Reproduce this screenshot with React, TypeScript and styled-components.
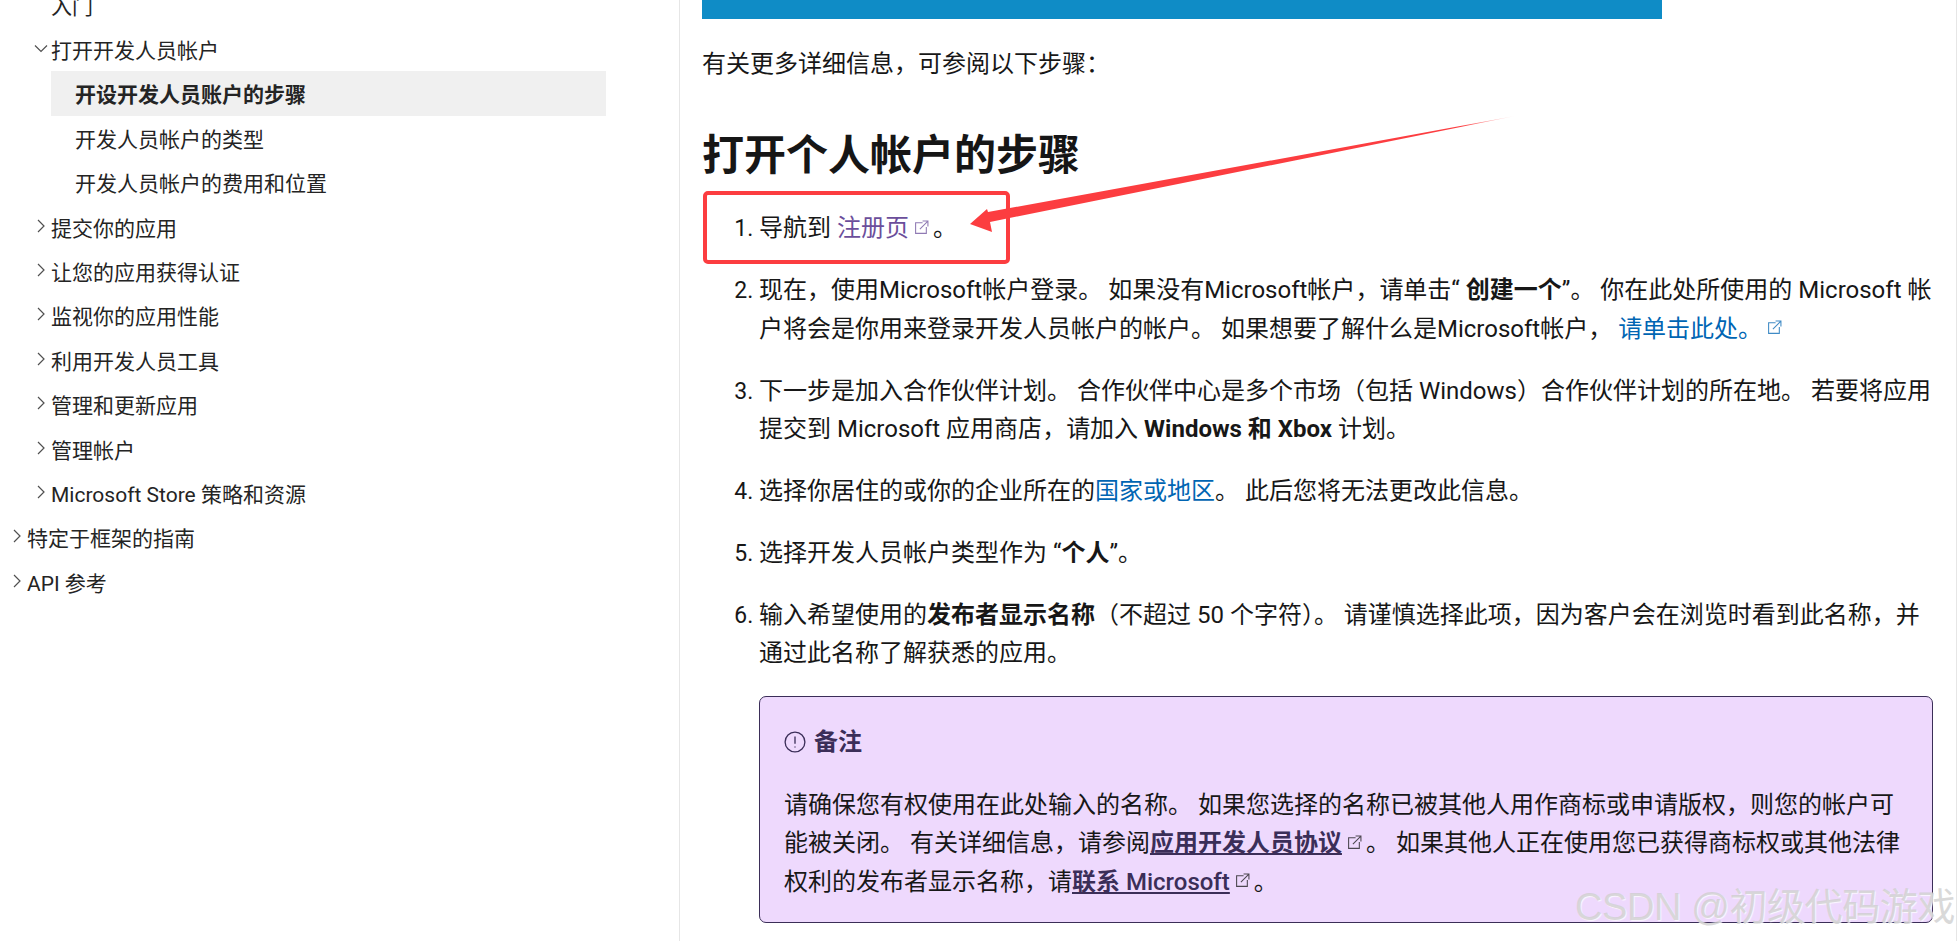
import styled, { createGlobalStyle } from 'styled-components';

const GlobalStyle = createGlobalStyle`
  html, body {
    margin: 0;
    height: 100%;
    overflow: hidden;
    background: #fff;
  }
  body {
    font-family: Roboto, "Noto Sans CJK SC", sans-serif;
    color: #171717;
  }
`;

const Page = styled.div`
  position: relative;
  display: flex;
  width: 1959px;
  height: 941px;
  overflow: hidden;
`;

const Sidebar = styled.aside`
  flex: 0 0 680px;
  box-sizing: border-box;
  border-right: 1px solid #e6e6e6;
`;

const TocList = styled.ul`
  list-style: none;
  margin: -17.5px 0 0;
  padding: 0;
`;

const TocRow = styled.li<{ $level: number; $active?: boolean }>`
  display: flex;
  align-items: center;
  height: 44.4px;
  box-sizing: border-box;
  margin-left: ${(p) => (p.$level === 0 ? 27 : 51)}px;
  width: ${(p) => (p.$level === 0 ? 579 : 555)}px;
  padding-left: ${(p) => (p.$level === 2 ? 24 : 0)}px;
  position: relative;
  font-size: 21px;
  color: #242424;
  font-weight: ${(p) => (p.$active ? 700 : 400)};
  background: ${(p) => (p.$active ? '#f0f0f0' : 'transparent')};
`;

const Caret = styled.svg`
  position: absolute;
  left: -17px;
  top: 50%;
  margin-top: -8px;
  width: 14px;
  height: 14px;
  fill: none;
  stroke: #505050;
  stroke-width: 1.2;
`;

const Main = styled.main`
  flex: 1;
  min-width: 0;
  padding: 0 23px 0 22px;
`;

const ScrollEdge = styled.div`
  flex: 0 0 3px;
  box-sizing: border-box;
  border-left: 1px solid #e6e6e6;
`;

const Banner = styled.div`
  width: 960px;
  height: 19px;
  background: #0f8cc6;
  margin-bottom: 26px;
`;

const Text = styled.p`
  margin: 0;
  font-size: 24px;
  line-height: 38.4px;
`;

const Heading = styled.h2`
  margin: 46px 0 26px;
  font-size: 42px;
  line-height: 54px;
  font-weight: 700;
  color: #161616;
`;

const Steps = styled.ol`
  margin: 0;
  padding: 0 0 0 57px;
  font-size: 24px;
  line-height: 38.4px;
`;

const Step = styled.li`
  margin-bottom: 23.5px;

  &::marker {
    content: counter(list-item) ". ";
    font-size: 23px;
  }
`;

const Link = styled.a<{ $visited?: boolean }>`
  color: ${(p) => (p.$visited ? '#6b4e9b' : '#0065b3')};
  text-decoration: none;
`;

const OutIcon = styled.svg`
  display: inline-block;
  width: 15px;
  height: 15px;
  margin: 0 4px 6px 5px;
  vertical-align: middle;
  fill: none;
  stroke: currentColor;
  stroke-width: 1;
  opacity: 0.75;
`;

const Note = styled.div`
  margin-top: 23px;
  padding: 26px 24px 21px 24px;
  background: #eed9fd;
  border: 1px solid #3b2e58;
  border-radius: 7px;
  font-size: 24px;
  line-height: 38.4px;
`;

const NoteTitle = styled.div`
  display: flex;
  align-items: center;
  gap: 8px;
  margin-bottom: 25px;
  font-weight: 700;
  color: #3b2e58;
`;

const NoteIcon = styled.svg`
  flex: 0 0 22px;
  width: 22px;
  height: 22px;
  fill: none;
  stroke: #3b2e58;
  stroke-width: 1.2;
`;

const NoteLink = styled.a<{ $bold?: boolean }>`
  color: #3b2e58;
  text-decoration: underline;
  font-weight: ${(p) => (p.$bold ? 700 : 500)};
`;

const RedBox = styled.div`
  position: absolute;
  left: 703px;
  top: 191px;
  width: 307px;
  height: 73px;
  box-sizing: border-box;
  border: 4px solid #fc3d40;
  border-radius: 5px;
`;

const ArrowLayer = styled.svg`
  position: absolute;
  left: 0;
  top: 0;
  width: 1959px;
  height: 941px;
  pointer-events: none;
`;

const Watermark = styled.div`
  position: absolute;
  right: 4px;
  top: 883px;
  font-family: "Liberation Sans", "Noto Sans CJK SC", sans-serif;
  font-size: 38px;
  line-height: 48px;
  letter-spacing: -0.4px;
  white-space: nowrap;
  color: rgba(205, 205, 205, 0.75);
  text-shadow: 1px 1px 1px rgba(255, 255, 255, 0.8);
`;

const Chevron = ({ open }: { open?: boolean }) => (
  <Caret viewBox="0 0 14 14">
    <path d={open ? 'M1 4.5L7 10.5L13 4.5' : 'M4 1L10 7L4 13'} />
  </Caret>
);

const ExternalIcon = () => (
  <OutIcon viewBox="0 0 14 14">
    <path d="M8 2.5H1.5V12.5H11.5V6.5" />
    <path d="M5.5 8.5L12.5 1.5M8 1H13V6" />
  </OutIcon>
);

// full-width punctuation, kept as escapes so it can't get normalised to ASCII
const C = '\uFF0C';
const LP = '\uFF08';
const RP = '\uFF09';

const tocRows = [
  { label: '入门', level: 1 },
  { label: '打开开发人员帐户', level: 1, caret: true, open: true },
  { label: '开设开发人员账户的步骤', level: 2, active: true },
  { label: '开发人员帐户的类型', level: 2 },
  { label: '开发人员帐户的费用和位置', level: 2 },
  { label: '提交你的应用', level: 1, caret: true },
  { label: '让您的应用获得认证', level: 1, caret: true },
  { label: '监视你的应用性能', level: 1, caret: true },
  { label: '利用开发人员工具', level: 1, caret: true },
  { label: '管理和更新应用', level: 1, caret: true },
  { label: '管理帐户', level: 1, caret: true },
  { label: 'Microsoft Store 策略和资源', level: 1, caret: true },
  { label: '特定于框架的指南', level: 0, caret: true },
  { label: 'API 参考', level: 0, caret: true },
];

const App = () => {
  return (
    <Page>
      <GlobalStyle />
      <Sidebar>
        <TocList>
          {tocRows.map((row) => (
            <TocRow key={row.label} $level={row.level} $active={row.active}>
              {row.caret && <Chevron open={row.open} />}
              {row.label}
            </TocRow>
          ))}
        </TocList>
      </Sidebar>

      <Main>
        <Banner />
        <Text>有关更多详细信息{C}可参阅以下步骤{'\uFF1A'}</Text>
        <Heading>打开个人帐户的步骤</Heading>
        <Steps>
          <Step>
            导航到 <Link $visited href="#">注册页<ExternalIcon /></Link>。
          </Step>
          <Step>
            现在{C}使用Microsoft帐户登录。 如果没有Microsoft帐户{C}请单击“ <b>创建一个</b>”。 你在此处所使用的 Microsoft 帐户将会是你用来登录开发人员帐户的帐户。 如果想要了解什么是Microsoft帐户{C} <Link href="#">请单击此处。<ExternalIcon /></Link>
          </Step>
          <Step>
            下一步是加入合作伙伴计划。 合作伙伴中心是多个市场{LP}包括 Windows{RP}合作伙伴计划的所在地。 若要将应用提交到 Microsoft 应用商店{C}请加入 <b>Windows 和 Xbox</b> 计划。
          </Step>
          <Step>
            选择你居住的或你的企业所在的<Link href="#">国家或地区</Link>。 此后您将无法更改此信息。
          </Step>
          <Step>
            选择开发人员帐户类型作为 “<b>个人</b>”。
          </Step>
          <Step>
            输入希望使用的<b>发布者显示名称</b>{LP}不超过 50 个字符{RP}。 请谨慎选择此项{C}因为客户会在浏览时看到此名称{C}并通过此名称了解获悉的应用。
            <Note>
              <NoteTitle>
                <NoteIcon viewBox="0 0 20 20">
                  <circle cx="10" cy="10" r="9" />
                  <path d="M10 5V11.5M10 14V15" />
                </NoteIcon>
                备注
              </NoteTitle>
              请确保您有权使用在此处输入的名称。 如果您选择的名称已被其他人用作商标或申请版权{C}则您的帐户可能被关闭。 有关详细信息{C}请参阅<NoteLink $bold href="#">应用开发人员协议</NoteLink><ExternalIcon />。 如果其他人正在使用您已获得商标权或其他法律权利的发布者显示名称{C}请<NoteLink href="#"><b>联系</b> Microsoft</NoteLink><ExternalIcon />。
            </Note>
          </Step>
        </Steps>
      </Main>
      <ScrollEdge />

      <RedBox />
      <ArrowLayer viewBox="0 0 1959 941">
        <defs>
          <linearGradient id="arrowFade" x1="970" y1="224" x2="1515" y2="116" gradientUnits="userSpaceOnUse">
            <stop offset="0.9" stopColor="#fc3d40" />
            <stop offset="1" stopColor="#fc3d40" stopOpacity="0.1" />
          </linearGradient>
        </defs>
        <polygon points="1515,116 988,212 987,209 970,224 992,232 990,222" fill="url(#arrowFade)" />
      </ArrowLayer>
      <Watermark>CSDN @初级代码游戏</Watermark>
    </Page>
  );
};

export default App;
